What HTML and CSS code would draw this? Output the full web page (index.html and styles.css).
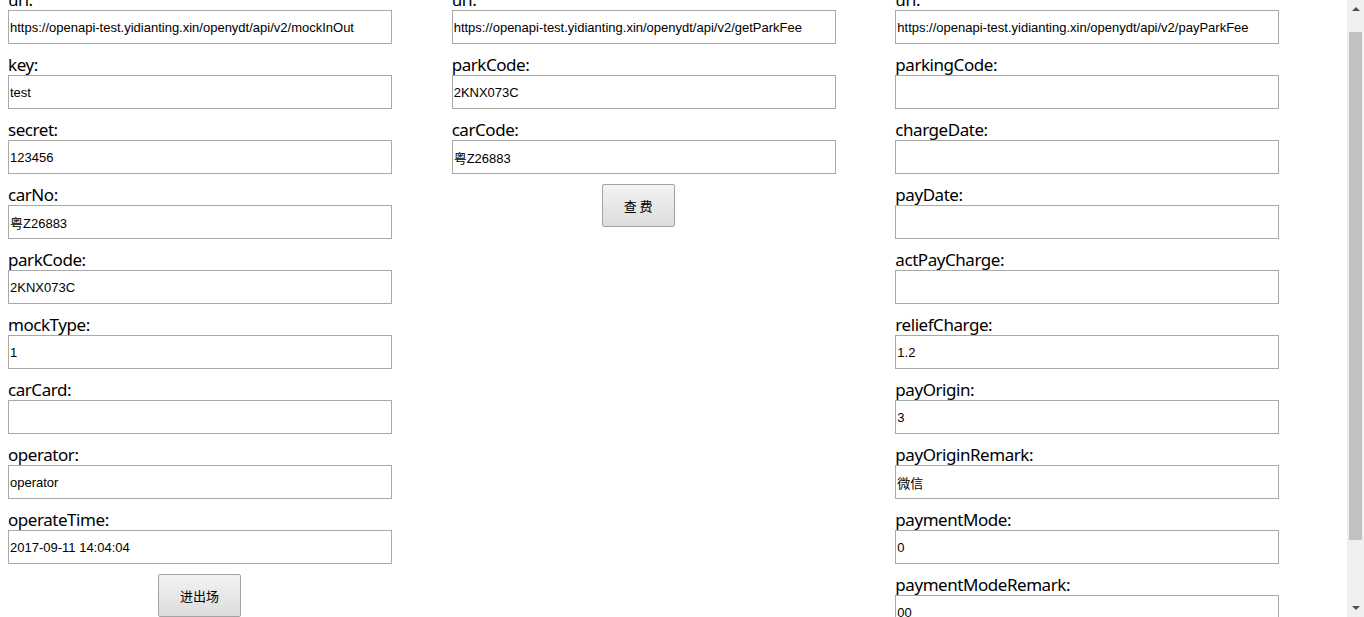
FILE: index.html
```html
<!DOCTYPE html>
<html lang="zh">
<head>
<meta charset="utf-8">
<title>API Test</title>
<link rel="stylesheet" href="styles.css">
</head>
<body>
<div class="page">
  <form class="col">
    <div class="field"><label class="lbl">url:</label><input class="inp" value="https://openapi-test.yidianting.xin/openydt/api/v2/mockInOut"></div>
    <div class="field"><label class="lbl">key:</label><input class="inp" value="test"></div>
    <div class="field"><label class="lbl">secret:</label><input class="inp" value="123456"></div>
    <div class="field"><label class="lbl">carNo:</label><input class="inp" value="粤Z26883"></div>
    <div class="field"><label class="lbl">parkCode:</label><input class="inp" value="2KNX073C"></div>
    <div class="field"><label class="lbl">mockType:</label><input class="inp" value="1"></div>
    <div class="field"><label class="lbl">carCard:</label><input class="inp" value=""></div>
    <div class="field"><label class="lbl">operator:</label><input class="inp" value="operator"></div>
    <div class="field"><label class="lbl">operateTime:</label><input class="inp" value="2017-09-11 14:04:04"></div>
    <div class="actions"><button type="button" class="btn">进出场</button></div>
  </form>
  <form class="col">
    <div class="field"><label class="lbl">url:</label><input class="inp" value="https://openapi-test.yidianting.xin/openydt/api/v2/getParkFee"></div>
    <div class="field"><label class="lbl">parkCode:</label><input class="inp" value="2KNX073C"></div>
    <div class="field"><label class="lbl">carCode:</label><input class="inp" value="粤Z26883"></div>
    <div class="actions"><button type="button" class="btn">查 费</button></div>
  </form>
  <form class="col">
    <div class="field"><label class="lbl">url:</label><input class="inp" value="https://openapi-test.yidianting.xin/openydt/api/v2/payParkFee"></div>
    <div class="field"><label class="lbl">parkingCode:</label><input class="inp" value=""></div>
    <div class="field"><label class="lbl">chargeDate:</label><input class="inp" value=""></div>
    <div class="field"><label class="lbl">payDate:</label><input class="inp" value=""></div>
    <div class="field"><label class="lbl">actPayCharge:</label><input class="inp" value=""></div>
    <div class="field"><label class="lbl">reliefCharge:</label><input class="inp" value="1.2"></div>
    <div class="field"><label class="lbl">payOrigin:</label><input class="inp" value="3"></div>
    <div class="field"><label class="lbl">payOriginRemark:</label><input class="inp" value="微信"></div>
    <div class="field"><label class="lbl">paymentMode:</label><input class="inp" value="0"></div>
    <div class="field"><label class="lbl">paymentModeRemark:</label><input class="inp" value="00"></div>
    <div class="actions"><button type="button" class="btn">支 付</button></div>
  </form>
</div>
<div class="scrollbar">
  <div class="arrow-up"></div>
  <div class="thumb"></div>
  <div class="arrow-down"></div>
</div>
</body>
</html>
```
FILE: styles.css
```css
html {
  overflow: hidden;
  height: 100%;
}
body {
  margin: -10px 25px 8px 8px;
  background: #fff;
  color: #000;
  font-family: "Noto Sans", "Noto Sans CJK SC", sans-serif;
}
.page {
  display: grid;
  grid-template-columns: repeat(3, 1fr);
  align-items: start;
}
.col {
  display: flex;
  flex-direction: column;
  margin: 0;
}
.field {
  display: flex;
  flex-direction: column;
  margin-top: 11px;
}
.field:first-child {
  margin-top: 0;
}
.lbl {
  display: block;
  height: 20px;
  line-height: 20px;
  font-size: 17px;
  letter-spacing: -0.45px;
  white-space: nowrap;
}
.inp {
  box-sizing: border-box;
  width: 384px;
  height: 34px;
  margin: 0;
  padding: 1px 1px;
  border: 1px solid #a9a9a9;
  border-radius: 0;
  background: #fff;
  color: #000;
  font-family: "Liberation Sans", "Noto Sans CJK SC", sans-serif;
  font-size: 13px;
  outline: none;
}
.actions {
  display: flex;
  margin-top: 10px;
  padding-left: 150px;
}
.btn {
  box-sizing: border-box;
  height: 43px;
  padding: 0 21px;
  margin: 0;
  border: 1px solid #a3a3a3;
  border-radius: 2px;
  background: linear-gradient(#f3f3f3, #dcdcdc);
  color: #000;
  font-family: "Noto Sans CJK SC", "Liberation Sans", sans-serif;
  font-size: 13px;
}
.scrollbar {
  position: fixed;
  top: 0;
  right: 0;
  width: 17px;
  height: 617px;
  background: #f0f0f0;
}
.thumb {
  position: absolute;
  left: 2px;
  top: 32px;
  width: 13px;
  height: 508px;
  background: #c1c1c1;
}
.arrow-up, .arrow-down {
  position: absolute;
  left: 5px;
  width: 0;
  height: 0;
  border-left: 4px solid transparent;
  border-right: 4px solid transparent;
}
.arrow-up {
  top: 7px;
  border-bottom: 4px solid #505050;
}
.arrow-down {
  top: 606px;
  border-top: 4px solid #505050;
}
```
